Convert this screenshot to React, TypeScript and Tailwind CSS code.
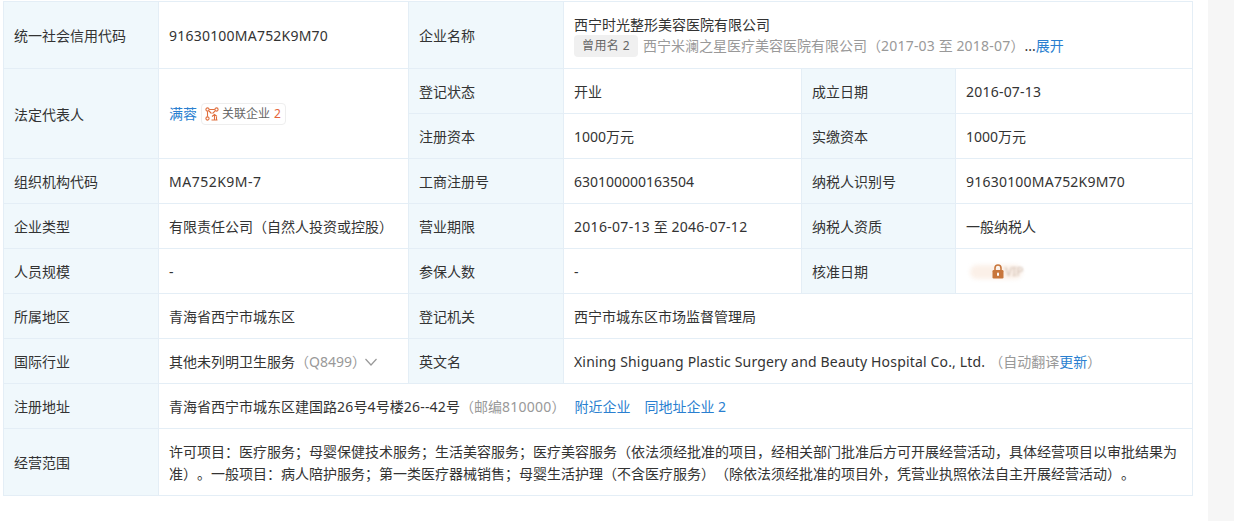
const font = '"Noto Sans", "Noto Sans CJK SC", sans-serif'

function Th({ children, rowSpan }: { children: React.ReactNode; rowSpan?: number }) {
  return (
    <td rowSpan={rowSpan} className="border border-[#e4eef6] bg-[#f0f8fc] pl-[10px] pr-2 pt-[2px] align-middle text-[#333]">
      {children}
    </td>
  )
}

function Td({ children, colSpan, rowSpan }: { children: React.ReactNode; colSpan?: number; rowSpan?: number }) {
  return (
    <td colSpan={colSpan} rowSpan={rowSpan} className="border border-[#e4eef6] bg-white pl-[10px] pr-2 pt-[2px] align-middle text-[#333]">
      {children}
    </td>
  )
}

// latin text runs a bit wider in the reference
function L({ children }: { children: React.ReactNode }) {
  return <span className="tracking-[0.22px]">{children}</span>
}

function RelationIcon() {
  return (
    <svg width="14" height="14" viewBox="0 0 14 14" fill="none" stroke="#e0703f" strokeWidth="1.1" className="mr-[3px] shrink-0">
      <circle cx="2.5" cy="2.5" r="1.6" />
      <circle cx="11.5" cy="2.5" r="1.6" />
      <circle cx="2.5" cy="11.5" r="1.6" />
      <path d="M4.2 2.5h5.6M2.5 4.2v5.6M4 4l2.5 2.5M10.2 3.8L7.5 6.5" />
      <path d="M9.5 7.5v5M7 9.5l2.5-2 2.5 2M6.5 13h6M11.5 10v3" />
    </svg>
  )
}

export default function App() {
  return (
    <div className="flex min-h-[521px] bg-white text-[14px] leading-[22px] [text-spacing-trim:space-all]" style={{ fontFamily: font }}>
      <div className="w-[1208px] pl-[3px] pt-px">
        <table className="w-[1189px] table-fixed border-collapse">
          <colgroup>
            <col className="w-[155px]" />
            <col className="w-[250px]" />
            <col className="w-[155px]" />
            <col className="w-[238px]" />
            <col className="w-[154px]" />
            <col className="w-[237px]" />
          </colgroup>
          <tbody>
            <tr className="h-[67px]">
              <Th>统一社会信用代码</Th>
              <Td><L>91630100MA752K9M70</L></Td>
              <Th>企业名称</Th>
              <Td colSpan={3}>
                <div className="-mt-[2px]">西宁时光整形美容医院有限公司</div>
                <div className="-mt-px flex items-center whitespace-nowrap text-[#999]">
                  <span className="mr-[5px] rounded-sm bg-[#f0f0f0] px-2 text-[12px] leading-[22px] tracking-[0.4px] text-[#666]">曾用名 2</span>
                  <span>西宁米澜之星医疗美容医院有限公司（<L>2017-03</L> 至 <L>2018-07</L>）</span>
                  <span className="text-[#333]">...</span>
                  <span className="text-[#2a7fd0]">展开</span>
                </div>
              </Td>
            </tr>
            <tr className="h-[45px]">
              <Th rowSpan={2}>法定代表人</Th>
              <Td rowSpan={2}>
                <div className="-mt-[2px] flex items-center">
                  <span className="text-[#2a7fd0]">满蓉</span>
                  <span className="ml-1 flex h-[22px] items-center rounded-sm border border-[#eeeeee] pl-[3px] pr-1 text-[12px] text-[#666]">
                    <RelationIcon />
                    关联企业<span className="ml-1 text-[#e5633a]">2</span>
                  </span>
                </div>
              </Td>
              <Th>登记状态</Th>
              <Td>开业</Td>
              <Th>成立日期</Th>
              <Td><L>2016-07-13</L></Td>
            </tr>
            <tr className="h-[45px]">
              <Th>注册资本</Th>
              <Td>1000万元</Td>
              <Th>实缴资本</Th>
              <Td>1000万元</Td>
            </tr>
            <tr className="h-[45px]">
              <Th>组织机构代码</Th>
              <Td><span className="tracking-[0.5px]">MA752K9M-7</span></Td>
              <Th>工商注册号</Th>
              <Td>630100000163504</Td>
              <Th>纳税人识别号</Th>
              <Td><L>91630100MA752K9M70</L></Td>
            </tr>
            <tr className="h-[45px]">
              <Th>企业类型</Th>
              <Td>有限责任公司（自然人投资或控股）</Td>
              <Th>营业期限</Th>
              <Td><span className="tracking-[0.3px]">2016-07-13</span> 至 <span className="tracking-[0.3px]">2046-07-12</span></Td>
              <Th>纳税人资质</Th>
              <Td>一般纳税人</Td>
            </tr>
            <tr className="h-[45px]">
              <Th>人员规模</Th>
              <Td>-</Td>
              <Th>参保人数</Th>
              <Td>-</Td>
              <Th>核准日期</Th>
              <Td>
                <div className="relative h-[22px] w-[60px] overflow-hidden">
                  <div className="absolute left-[4px] top-[4px] h-[14px] w-[52px] rounded-full bg-[#fbf0e8] blur-[2px]" />
                  <span className="absolute left-[39px] top-0 text-[12px] text-[#d2bfb2] blur-[1px]">VIP</span>
                  <svg width="12" height="15" viewBox="0 0 12 15" className="absolute left-[26px] top-[3px]">
                    <path d="M3 6.5V4a3 3 0 016 0v2.5" fill="none" stroke="#c8763c" strokeWidth="1.6" />
                    <rect x="0.5" y="6" width="11" height="8.5" rx="1.2" fill="#c8763c" />
                    <rect x="5" y="8.5" width="2" height="3.5" rx="1" fill="#fff" />
                  </svg>
                </div>
              </Td>
            </tr>
            <tr className="h-[45px]">
              <Th>所属地区</Th>
              <Td>青海省西宁市城东区</Td>
              <Th>登记机关</Th>
              <Td colSpan={3}>西宁市城东区市场监督管理局</Td>
            </tr>
            <tr className="h-[45px]">
              <Th>国际行业</Th>
              <Td>
                <div className="flex items-center whitespace-nowrap">
                  其他未列明卫生服务<span className="text-[#999]">（Q8499）</span>
                  <svg width="14" height="14" viewBox="0 0 14 14" fill="none" stroke="#999" strokeWidth="1.2" className="-ml-0.5">
                    <path d="M1.5 4l5.5 6 5.5-6" />
                  </svg>
                </div>
              </Td>
              <Th>英文名</Th>
              <Td colSpan={3}>
                <span className="tracking-[0.17px]">Xining Shiguang Plastic Surgery and Beauty Hospital Co., Ltd.</span>
                <span className="ml-[4px] text-[#999]">（自动翻译<span className="text-[#2a7fd0]">更新</span>）</span>
              </Td>
            </tr>
            <tr className="h-[45px]">
              <Th>注册地址</Th>
              <Td colSpan={5}>
                青海省西宁市城东区建国路<L>26</L>号<L>4</L>号楼<L>26--42</L>号
                <span className="text-[#999]">（邮编<L>810000</L>）</span>
                <span className="ml-[9px] text-[#2a7fd0]">附近企业</span>
                <span className="ml-[14px] text-[#2a7fd0]">同地址企业 2</span>
              </Td>
            </tr>
            <tr className="h-[67px]">
              <Th>经营范围</Th>
              <Td colSpan={5}>
                <p className="pr-1 leading-[22px]">
                  许可项目：医疗服务；母婴保健技术服务；生活美容服务；医疗美容服务（依法须经批准的项目，经相关部门批准后方可开展经营活动，具体经营项目以审批结果为准）。一般项目：病人陪护服务；第一类医疗器械销售；母婴生活护理（不含医疗服务）（除依法须经批准的项目外，凭营业执照依法自主开展经营活动）。
                </p>
              </Td>
            </tr>
          </tbody>
        </table>
      </div>
      <div className="flex-1 bg-[#f6f6f6]" />
    </div>
  )
}
